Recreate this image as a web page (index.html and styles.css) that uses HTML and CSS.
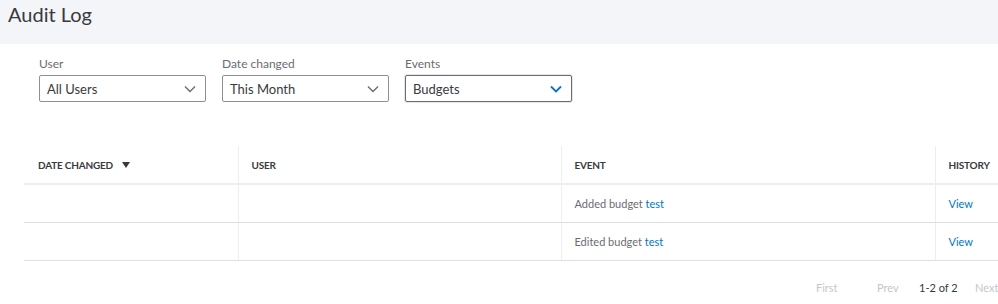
FILE: index.html
```html
<!DOCTYPE html>
<html lang="en">
<head>
    <meta charset="UTF-8">
    <meta name="viewport" content="width=device-width, initial-scale=1.0">
    <title>Audit Log</title>
    <link rel="stylesheet" href="styles.css">
</head>
<body>
    <div class="page">
        <div class="page-header">
            <h1>Audit Log</h1>
        </div>

        <div class="filters">
            <div class="filter">
                <label>User</label>
                <div class="select">
                    <span>All Users</span>
                    <svg width="12" height="8" viewBox="0 0 12 8"><path d="M1 1.5l5 5 5-5" fill="none" stroke="#6b6c72" stroke-width="1.4"/></svg>
                </div>
            </div>
            <div class="filter">
                <label>Date changed</label>
                <div class="select">
                    <span>This Month</span>
                    <svg width="12" height="8" viewBox="0 0 12 8"><path d="M1 1.5l5 5 5-5" fill="none" stroke="#6b6c72" stroke-width="1.4"/></svg>
                </div>
            </div>
            <div class="filter">
                <label>Events</label>
                <div class="select active">
                    <span>Budgets</span>
                    <svg width="12" height="8" viewBox="0 0 12 8"><path d="M1 1.5l5 5 5-5" fill="none" stroke="#0077c5" stroke-width="1.8"/></svg>
                </div>
            </div>
        </div>

        <table class="log">
            <colgroup>
                <col class="col-date">
                <col class="col-user">
                <col class="col-event">
                <col class="col-history">
            </colgroup>
            <thead>
                <tr>
                    <th>Date changed <svg class="sort" width="8" height="6" viewBox="0 0 8 6"><path d="M0 0h8L4 6z" fill="#393a3d"/></svg></th>
                    <th>User</th>
                    <th>Event</th>
                    <th>History</th>
                </tr>
            </thead>
            <tbody>
                <tr>
                    <td></td>
                    <td></td>
                    <td>Added budget <a href="#">test</a></td>
                    <td><a href="#">View</a></td>
                </tr>
                <tr>
                    <td></td>
                    <td></td>
                    <td>Edited budget <a href="#">test</a></td>
                    <td><a href="#">View</a></td>
                </tr>
            </tbody>
        </table>

        <div class="pager">
            <span class="off first">First</span>
            <span class="off prev">Prev</span>
            <span class="count">1-2 of 2</span>
            <span class="off">Next</span>
        </div>
    </div>
</body>
</html>
```

FILE: styles.css
```css
body {
    margin: 0;
    font-family: Lato, "Open Sans", sans-serif;
    color: #393a3d;
    background-color: #fff;
    overflow: hidden;
}
.page {
    width: 1100px;
}
.page-header {
    background-color: #f4f5f8;
    height: 44px;
    padding: 0 8px;
    width: 982px;
}
.page-header h1 {
    margin: 0;
    padding-top: 1px;
    font-size: 20px;
    font-weight: 400;
    line-height: 26px;
}
.filters {
    display: flex;
    gap: 16px;
    padding: 12px 0 0 39px;
}
.filter label {
    display: block;
    font-size: 12px;
    color: #6b6c72;
    line-height: 15px;
    margin-bottom: 4px;
}
.select {
    width: 167px;
    height: 27px;
    box-sizing: border-box;
    border: 1px solid #8d9096;
    border-radius: 2px;
    display: flex;
    align-items: center;
    justify-content: space-between;
    padding: 0 9px 0 7px;
    font-size: 13px;
}
.select.active {
    border-color: #6b6c72;
    box-shadow: 0 0 0 1px #e5e6e8;
}
.log {
    margin: 44px 0 0 24px;
    border-collapse: collapse;
    table-layout: fixed;
    width: 1034px;
    font-size: 11px;
}
.col-date { width: 214px; }
.col-user { width: 323px; }
.col-event { width: 374px; }
.col-history { width: 123px; }
.log th {
    height: 37px;
    text-align: left;
    font-size: 10px;
    font-weight: 700;
    letter-spacing: -0.2px;
    text-transform: uppercase;
    color: #393a3d;
    padding: 0 13px;
    border-bottom: 2px solid #eceef1;
    border-left: 1px solid #eceef1;
}
.log td {
    height: 37px;
    padding: 0 13px;
    color: #6b6c72;
    border-bottom: 1px solid #dcdfe3;
    border-left: 1px solid #eceef1;
}
.log tr > :first-child {
    border-left: none;
    padding-left: 14px;
}
.sort {
    margin-left: 7px;
    vertical-align: 1px;
}
.log a {
    color: #0077c5;
    text-decoration: none;
}
.pager {
    display: flex;
    align-items: center;
    padding: 20px 0 0 816px;
    font-size: 11px;
}
.pager .off {
    color: #c4c6ca;
}
.pager .first {
    width: 61px;
}
.pager .prev {
    width: 42px;
}
.pager .count {
    width: 56px;
    color: #393a3d;
}
```
